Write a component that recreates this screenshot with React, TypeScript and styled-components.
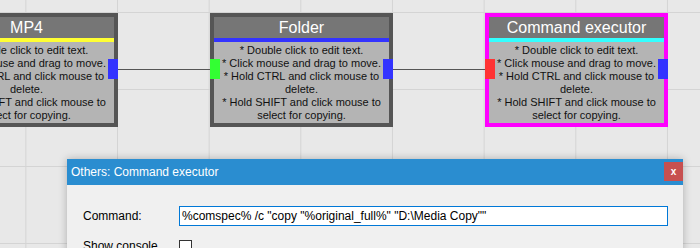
import { ReactElement } from "react";
import styled, { createGlobalStyle } from "styled-components";

const GlobalStyle = createGlobalStyle`
  html, body {
    margin: 0;
    padding: 0;
    background: #e8e8e8;
  }
  * {
    box-sizing: border-box;
  }
`;

const Canvas = styled.div`
  position: relative;
  width: 700px;
  height: 248px;
  overflow: hidden;
  font-family: "Liberation Sans", Arial, sans-serif;
  background-color: #e8e8e8;
  background-image: linear-gradient(to right, #d4d4d4 1px, transparent 1px),
    linear-gradient(to bottom, #d4d4d4 1px, transparent 1px);
  background-size: 91.67px 77px;
  background-position: 117px 12px;
`;

const Wire = styled.div<{ $x: number; $w: number }>`
  position: absolute;
  left: ${(p) => p.$x}px;
  top: 69px;
  width: ${(p) => p.$w}px;
  height: 1px;
  background: #555555;
`;

const NodeBox = styled.div<{ $x: number; $selected?: boolean }>`
  position: absolute;
  left: ${(p) => p.$x}px;
  top: 13px;
  width: 183px;
  height: 114px;
  border: 4px solid ${(p) => (p.$selected ? "#ff00ff" : "#555555")};
  display: flex;
  flex-direction: column;
`;

const NodeTitle = styled.div`
  height: 21px;
  line-height: 21px;
  background: #767676;
  color: #ffffff;
  font-size: 16px;
  text-align: center;
  white-space: nowrap;
`;

const Stripe = styled.div<{ $color: string }>`
  height: 4px;
  background: ${(p) => p.$color};
`;

const NodeBody = styled.div`
  flex: 1;
  background: #b4b4b4;
  color: #111111;
  font-size: 11px;
  line-height: 12.9px;
  text-align: center;
  padding: 2px 5px 0;
`;

const Port = styled.div<{ $side: "left" | "right"; $color: string }>`
  position: absolute;
  top: 42px;
  ${(p) => p.$side}: -4px;
  width: 10px;
  height: 20px;
  background: ${(p) => p.$color};
`;

type NodeProps = {
  x: number;
  title: string;
  stripe: string;
  selected?: boolean;
  left?: string;
  right?: string;
};

const Node = ({ x, title, stripe, selected, left, right }: NodeProps): ReactElement => (
  <NodeBox $x={x} $selected={selected}>
    <NodeTitle>{title}</NodeTitle>
    <Stripe $color={stripe} />
    <NodeBody>
      * Double click to edit text.
      <br />* Click mouse and drag to move.
      <br />* Hold CTRL and click mouse to delete.
      <br />* Hold SHIFT and click mouse to select for copying.
    </NodeBody>
    {left && <Port $side="left" $color={left} />}
    {right && <Port $side="right" $color={right} />}
  </NodeBox>
);

const Dialog = styled.div`
  position: absolute;
  left: 67px;
  top: 159px;
  width: 616px;
  height: 140px;
  background: #f0f0f0;
  box-shadow: 0 0 8px rgba(0, 0, 0, 0.25);
`;

const TitleBar = styled.div`
  height: 26px;
  background: #2a8dd0;
  color: #ffffff;
  font-size: 12px;
  display: flex;
  align-items: center;
  justify-content: space-between;
  padding-left: 4px;
`;

const CloseButton = styled.div`
  align-self: flex-start;
  margin-top: 3px;
  width: 19px;
  height: 19px;
  background: #c75050;
  color: #ffffff;
  font-size: 10px;
  font-weight: bold;
  display: flex;
  align-items: center;
  justify-content: center;
`;

const Form = styled.div`
  display: grid;
  grid-template-columns: 96px 1fr;
  row-gap: 13px;
  align-items: center;
  padding: 21px 15px 0 16px;
  font-size: 12px;
  color: #000000;
`;

const Label = styled.div``;

const TextInput = styled.div`
  height: 20px;
  border: 1px solid #0078d7;
  background: #ffffff;
  padding-left: 2px;
  line-height: 18px;
  white-space: nowrap;
`;

const CheckBox = styled.div`
  width: 13px;
  height: 13px;
  border: 1px solid #333333;
  background: #ffffff;
`;

const App = (): ReactElement => (
  <Canvas>
    <GlobalStyle />
    <Wire $x={118} $w={92} />
    <Wire $x={393} $w={92} />
    <Node x={-65} title="MP4" stripe="#ffff33" right="#3333ff" />
    <Node x={210} title="Folder" stripe="#3333ff" left="#33ff33" right="#3333ff" />
    <Node
      x={485}
      title="Command executor"
      stripe="#33ffff"
      selected
      left="#ff3333"
      right="#3333ff"
    />
    <Dialog>
      <TitleBar>
        <span>Others: Command executor</span>
        <CloseButton>x</CloseButton>
      </TitleBar>
      <Form>
        <Label>Command:</Label>
        <TextInput>%comspec% /c "copy "%original_full%" "D:\Media Copy""</TextInput>
        <Label>Show console</Label>
        <CheckBox />
      </Form>
    </Dialog>
  </Canvas>
);

export default App;
